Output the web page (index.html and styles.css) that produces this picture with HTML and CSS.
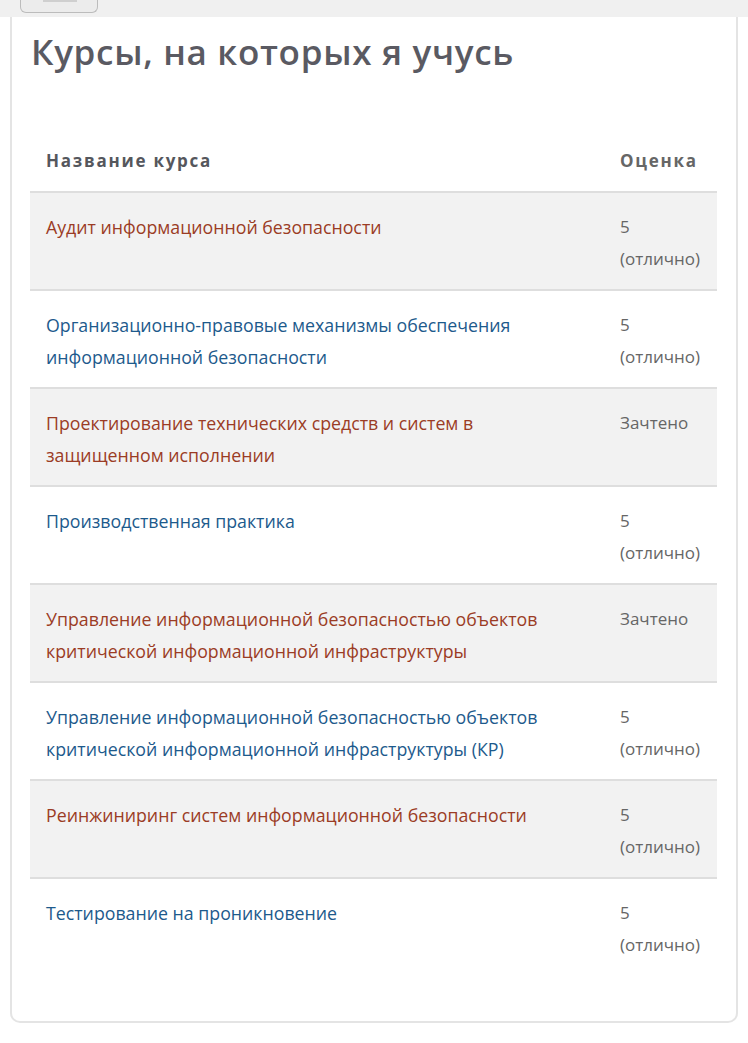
FILE: index.html
```html
<!DOCTYPE html>
<html lang="ru">
<head>
<meta charset="utf-8">
<title>Курсы, на которых я учусь</title>
<link rel="stylesheet" href="styles.css">
</head>
<body>
<div class="topbar">
  <div class="tab"><span class="tab-line"></span></div>
</div>
<section class="card">
  <h2 class="title">Курсы, на которых я учусь</h2>
  <table class="courses">
    <thead>
      <tr><th class="name">Название курса</th><th class="grade">Оценка</th></tr>
    </thead>
    <tbody>
      <tr><td class="name"><a class="red" href="#">Аудит информационной безопасности</a></td><td class="grade">5 (отлично)</td></tr>
      <tr><td class="name"><a class="blue" href="#">Организационно-правовые механизмы обеспечения информационной безопасности</a></td><td class="grade">5 (отлично)</td></tr>
      <tr><td class="name"><a class="red" href="#">Проектирование технических средств и систем в защищенном исполнении</a></td><td class="grade">Зачтено</td></tr>
      <tr><td class="name"><a class="blue" href="#">Производственная практика</a></td><td class="grade">5 (отлично)</td></tr>
      <tr><td class="name"><a class="red" href="#">Управление информационной безопасностью объектов критической информационной инфраструктуры</a></td><td class="grade">Зачтено</td></tr>
      <tr><td class="name"><a class="blue" href="#">Управление информационной безопасностью объектов критической информационной инфраструктуры (КР)</a></td><td class="grade">5 (отлично)</td></tr>
      <tr><td class="name"><a class="red" href="#">Реинжиниринг систем информационной безопасности</a></td><td class="grade">5 (отлично)</td></tr>
      <tr class="last"><td class="name"><a class="blue" href="#">Тестирование на проникновение</a></td><td class="grade">5 (отлично)</td></tr>
    </tbody>
  </table>
</section>
</body>
</html>
```

FILE: styles.css
```css
html, body {
  margin: 0;
  padding: 0;
  background: #ffffff;
  font-family: "Open Sans", "Liberation Sans", sans-serif;
}

.topbar {
  height: 17px;
  background: #f0f0f0;
  padding-left: 20px;
}

.tab {
  position: relative;
  width: 76px;
  height: 12px;
  background: #ececec;
  border: 1px solid #bcbcbc;
  border-top: none;
  border-radius: 0 0 6px 6px;
}

.tab-line {
  position: absolute;
  left: 22px;
  top: 0;
  width: 34px;
  height: 2px;
  background: #cfcfcf;
}

.card {
  margin: 0 10px 21px;
  border: 2px solid #e4e4e4;
  border-top: none;
  border-radius: 0 0 10px 10px;
  padding: 12px 19px 46px 18px;
}

.title {
  margin: 0 0 52px;
  padding-left: 1px;
  font-size: 35px;
  font-weight: 600;
  letter-spacing: 0.7px;
  line-height: 46px;
  color: #5a5a62;
}

.courses {
  width: 100%;
  border-collapse: collapse;
  font-size: 17.75px;
  line-height: 32px;
}

.courses th {
  text-align: left;
  font-weight: 700;
  font-size: 17px;
  letter-spacing: 1.75px;
  color: #55575d;
  padding: 18px 16px 14px;
  border-bottom: 2px solid #dedede;
}

.courses td {
  vertical-align: top;
  padding: 18px 16px 14px;
  border-bottom: 2px solid #dedede;
}

.courses tbody tr:nth-child(odd) td {
  background: #f2f2f2;
}

.courses tr.last td {
  border-bottom: none;
}

.courses .grade {
  width: 81px;
  color: #666666;
}

.courses td.grade {
  font-size: 17px;
}

.courses a {
  text-decoration: none;
}

.red {
  color: #9b3c25;
}

.blue {
  color: #1d5a8c;
}
```
